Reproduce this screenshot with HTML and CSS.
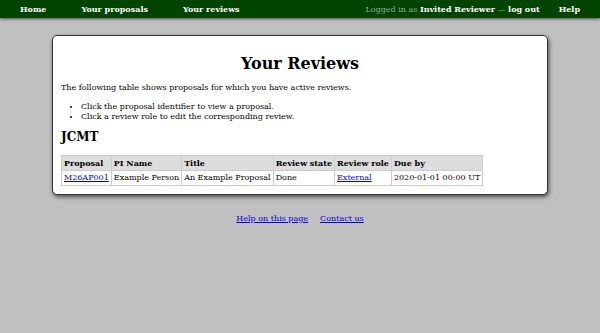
FILE: index.html
```html
<!DOCTYPE html>
<html>
<head>
<meta charset="utf-8">
<link rel="stylesheet" href="styles.css">
<title>Your Reviews</title>
</head>
<body>
<nav class="topbar">
  <div class="nav-left">
    <a class="nav-link" href="#">Home</a>
    <a class="nav-link" href="#">Your proposals</a>
    <a class="nav-link" href="#">Your reviews</a>
  </div>
  <div class="nav-right">
    <span class="login">Logged in as <b class="user">Invited Reviewer</b> &mdash; <a class="nav-link plain" href="#">log out</a></span>
    <a class="nav-link" href="#">Help</a>
  </div>
</nav>
<main class="box">
  <h1 class="title">Your Reviews</h1>
  <p class="intro">The following table shows proposals for which you have active reviews.</p>
  <ul class="tips">
    <li>Click the proposal identifier to view a proposal.</li>
    <li>Click a review role to edit the corresponding review.</li>
  </ul>
  <h2 class="facility">JCMT</h2>
  <table class="reviews">
    <tr>
      <th>Proposal</th>
      <th>PI Name</th>
      <th>Title</th>
      <th>Review state</th>
      <th>Review role</th>
      <th>Due by</th>
    </tr>
    <tr>
      <td><a href="#">M26AP001</a></td>
      <td>Example Person</td>
      <td>An Example Proposal</td>
      <td>Done</td>
      <td><a href="#">External</a></td>
      <td>2020-01-01 00:00 UT</td>
    </tr>
  </table>
</main>
<footer class="footer">
  <a href="#">Help on this page</a>
  <a href="#">Contact us</a>
</footer>
</body>
</html>
```
FILE: styles.css
```css
html, body {
  margin: 0;
  padding: 0;
}
body {
  background: #c0c0c0;
  font-family: "DejaVu Serif", serif;
  font-size: 8px;
  line-height: 10px;
  color: #000;
}
.topbar {
  background: #004400;
  height: 18px;
  display: flex;
  justify-content: space-between;
  align-items: center;
  padding: 0 20px;
  box-shadow: 0 1px 3px rgba(0,0,0,0.6);
}
.nav-left {
  display: flex;
  align-items: center;
  gap: 35px;
}
.nav-right {
  display: flex;
  align-items: center;
  gap: 19px;
}
.nav-link {
  color: #fff;
  font-weight: bold;
  text-decoration: none;
}
.login {
  color: #9aab9a;
}
.user {
  color: #fff;
}
.box {
  background: #fff;
  margin: 17px 52px 0;
  border: 1px solid #333;
  border-radius: 5px;
  box-shadow: 1px 2px 4px rgba(0,0,0,0.6);
  padding: 8px 8px 8px;
}
.title {
  text-align: center;
  font-size: 16px;
  line-height: 19px;
  margin: 10px 0 10px;
}
.intro {
  margin: 0 0 9px;
}
.tips {
  margin: 0 0 8px;
  padding-left: 20px;
}
.facility {
  font-size: 12px;
  line-height: 14px;
  margin: 0 0 11px;
}
.reviews {
  border-collapse: collapse;
}
.reviews th, .reviews td {
  border: 1px solid #ccc;
  padding: 2px 2px;
  text-align: left;
  white-space: nowrap;
}
.reviews th {
  background: #ddd;
}
a {
  color: #00e;
}
.footer {
  display: flex;
  justify-content: center;
  gap: 12px;
  margin-top: 19px;
}
```
